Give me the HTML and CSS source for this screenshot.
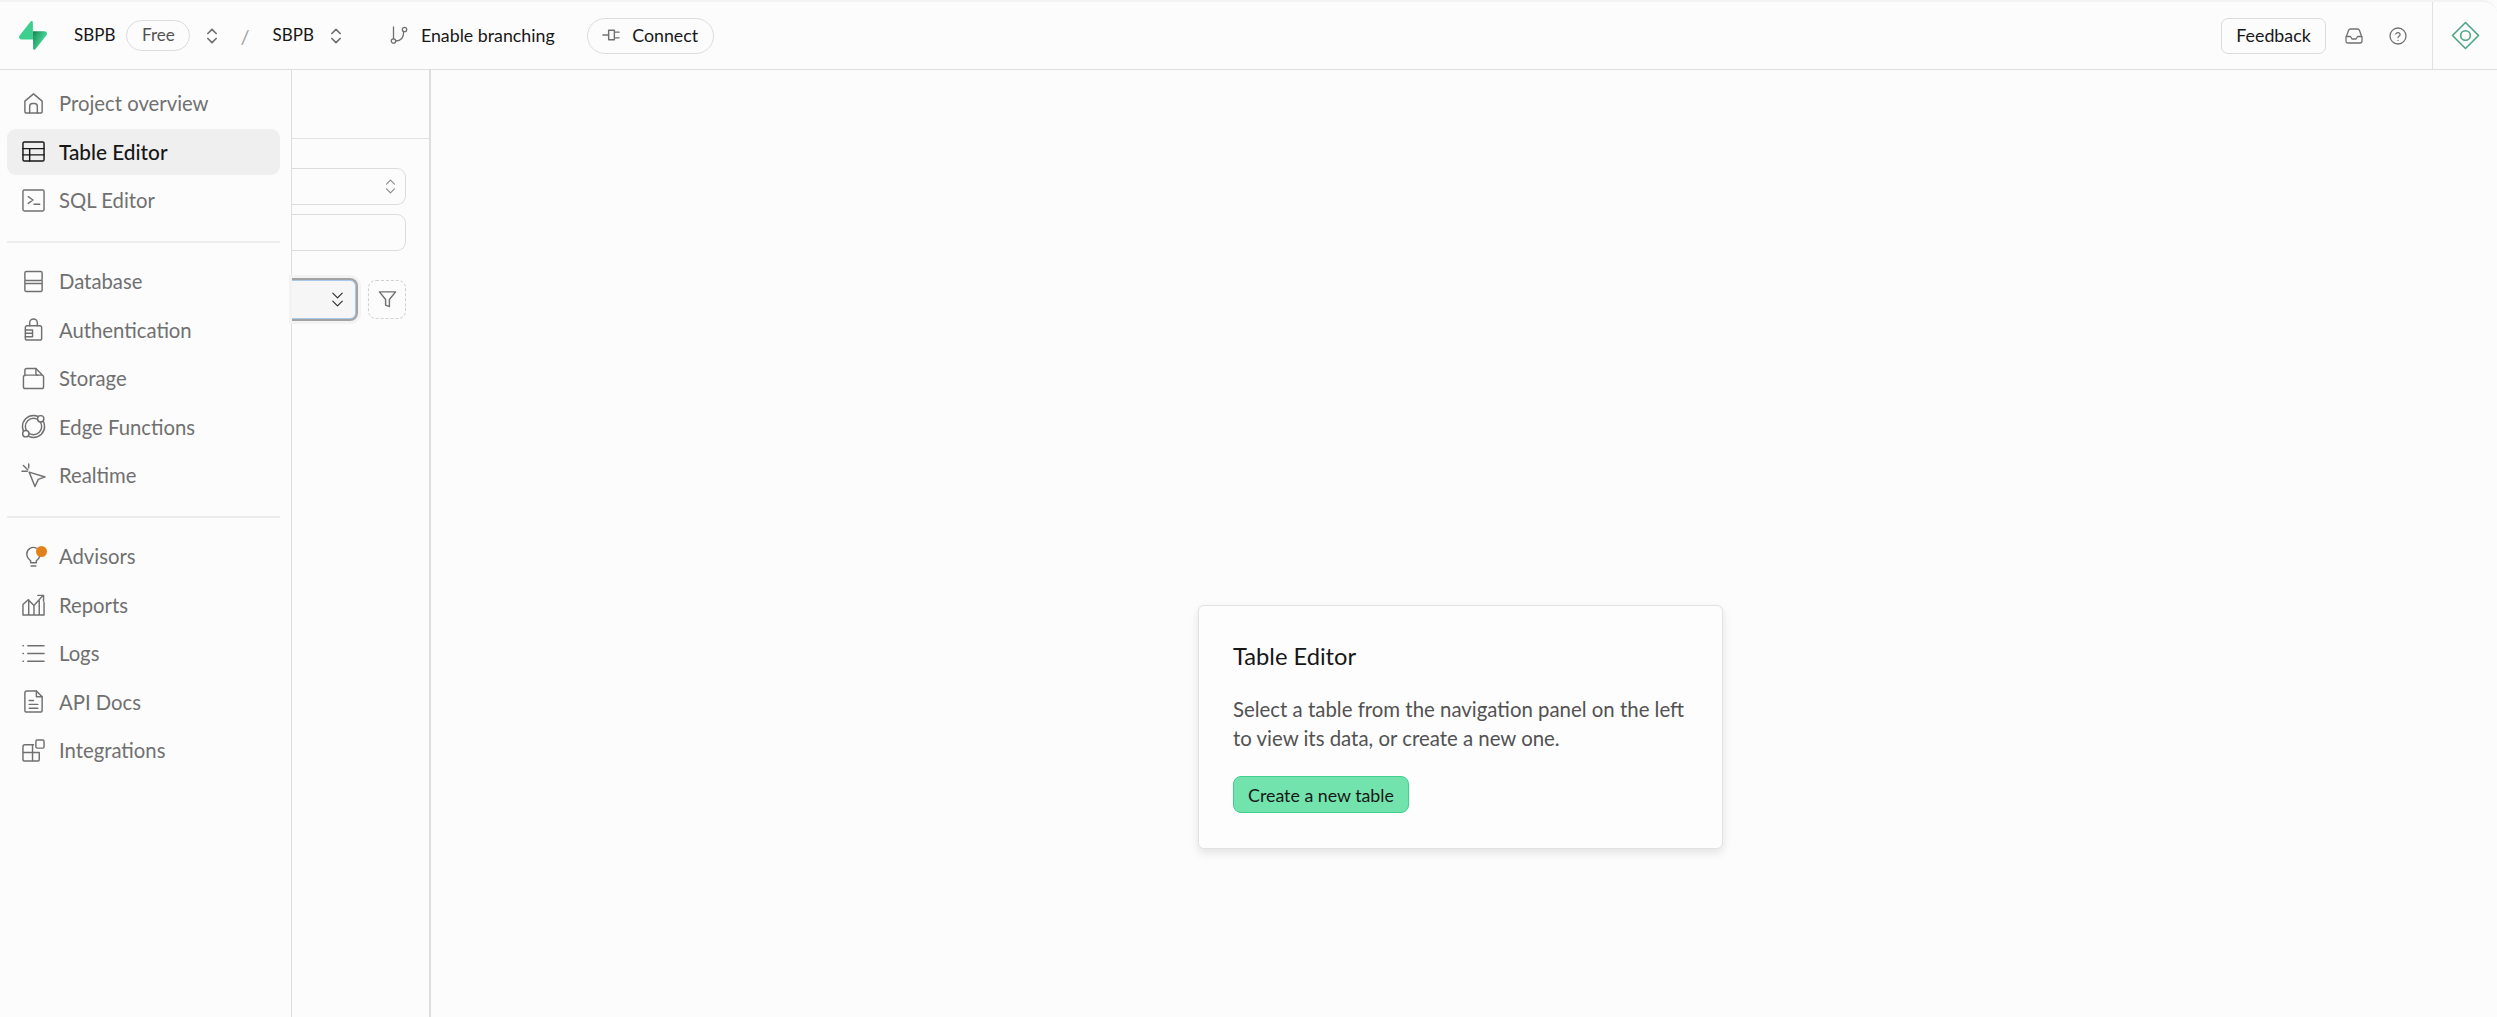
FILE: index.html
```html
<!DOCTYPE html>
<html>
<head>
    <meta charset="UTF-8">
    <title>Table Editor</title>
    <link rel="stylesheet" href="styles.css">
</head>
<body>
    <svg class="defs" width="0" height="0">
        <defs>
            <linearGradient id="logo-a" x1="53.97" y1="54.97" x2="94.16" y2="71.83" gradientUnits="userSpaceOnUse">
                <stop offset="0" stop-color="#249361"/>
                <stop offset="1" stop-color="#3ECF8E"/>
            </linearGradient>
            <linearGradient id="logo-b" x1="36.16" y1="30.58" x2="54.48" y2="65.08" gradientUnits="userSpaceOnUse">
                <stop offset="0" stop-color="#000"/>
                <stop offset="1" stop-color="#000" stop-opacity="0"/>
            </linearGradient>
        </defs>
    </svg>

    <header class="topbar">
        <svg class="logo" viewBox="0 0 109 113">
            <path d="M63.7 110.3C60.8 113.9 55.1 111.9 55 107.3L54 40.1H99.2C107.4 40.1 112 49.5 106.9 55.9L63.7 110.3Z" fill="url(#logo-a)"/>
            <path d="M63.7 110.3C60.8 113.9 55.1 111.9 55 107.3L54 40.1H99.2C107.4 40.1 112 49.5 106.9 55.9L63.7 110.3Z" fill="url(#logo-b)" fill-opacity="0.2"/>
            <path d="M45.3 2.1C48.2 -1.5 54 0.4 54 5L54.5 72.3H9.8C1.6 72.3 -2.9 62.8 2.2 56.4L45.3 2.1Z" fill="#3ECF8E"/>
        </svg>
        <span class="crumb crumb-org">SBPB</span>
        <span class="plan">Free</span>
        <svg class="icon-sm chevrons" viewBox="0 0 24 24"><path d="m7 9 5-5 5 5M7 15l5 5 5-5"/></svg>
        <span class="slash">/</span>
        <span class="crumb">SBPB</span>
        <svg class="icon-sm chevrons" viewBox="0 0 24 24"><path d="m7 9 5-5 5 5M7 15l5 5 5-5"/></svg>
        <a class="branching">
            <svg class="icon-sm" viewBox="0 0 18 18"><circle cx="3.5" cy="15" r="2.2"/><circle cx="14.5" cy="3.5" r="2.2"/><path d="M3.5 1v11.8M5.7 15c5 0 8-3.5 8-9.5"/></svg>
            Enable branching
        </a>
        <a class="connect">
            <svg class="icon-plug" viewBox="0 0 20 14"><path d="M1 7h6M7 2h6v10H7zM13 4h5M13 10h5"/></svg>
            Connect
        </a>
        <div class="topbar-right">
            <a class="feedback">Feedback</a>
            <svg class="icon-sm inbox" viewBox="0 0 18 16"><path d="M1 9.5 3.5 2.5Q4 1 5.5 1h7q1.5 0 2 1.5L17 9.5V13q0 2-2 2H3q-2 0-2-2zM1 8.5h4.5L7 11h4l1.5-2.5H17"/></svg>
            <svg class="icon-sm help" viewBox="0 0 18 18"><circle cx="9" cy="9" r="8"/><path d="M6.8 7a2.3 2.3 0 0 1 4.4.6c0 1.5-2.2 1.8-2.2 3"/><path d="M9 13.3v.1"/></svg>
            <div class="account">
                <svg class="diamond" viewBox="0 0 30 30"><path d="M15 1.5 28.5 15 15 28.5 1.5 15z"/><circle cx="15" cy="15" r="5"/></svg>
            </div>
        </div>
    </header>

    <div class="layout">
        <nav class="sidebar">
            <div class="nav-group">
                <a class="nav-item">
                    <svg class="nav-icon" viewBox="0 0 24 24"><path d="M3 9.5 12 2l9 7.5V20q0 2-2 2H5q-2 0-2-2z"/><path d="M8 22v-7q0-3 3-3h2q3 0 3 3v7"/></svg>
                    Project overview
                </a>
                <a class="nav-item active">
                    <svg class="nav-icon" viewBox="0 0 24 24"><rect x="1" y="2" width="22" height="20" rx="1.5"/><path d="M1 9h22M1 15.5h22M8 9v13"/></svg>
                    Table Editor
                </a>
                <a class="nav-item">
                    <svg class="nav-icon" viewBox="0 0 24 24"><rect x="1" y="1" width="22" height="22" rx="1.5"/><path d="m6.5 8 5 3.5-5 3.5M12.5 16h6"/></svg>
                    SQL Editor
                </a>
            </div>
            <div class="nav-line"></div>
            <div class="nav-group">
                <a class="nav-item">
                    <svg class="nav-icon" viewBox="0 0 24 24"><rect x="3" y="1.5" width="18" height="9.5" rx="1.5"/><rect x="3" y="14" width="18" height="8.5" rx="1.5"/><path d="M3 11v3M21 11v3"/></svg>
                    Database
                </a>
                <a class="nav-item">
                    <svg class="nav-icon" viewBox="0 0 24 24"><path d="M8 8V5a4 4 0 0 1 8 0v3"/><rect x="3.5" y="8" width="17" height="15" rx="2"/><path d="M3.5 12.5H11v7H3.5M3.5 16H11"/></svg>
                    Authentication
                </a>
                <a class="nav-item">
                    <svg class="nav-icon" viewBox="0 0 24 24"><path d="M1.5 10.5v10q0 2 2 2h17q2 0 2-2v-10q0-2-2-2h-17q-2 0-2 2zM3 9V3.5q0-2 2-2h9.5L21 8"/><path d="M14.5 1.5v5q0 2 2 2"/></svg>
                    Storage
                </a>
                <a class="nav-item">
                    <svg class="nav-icon nav-icon-big" viewBox="0 0 26 26"><circle cx="13" cy="13" r="8.5"/><circle cx="13" cy="13" r="11.5"/><circle cx="20.5" cy="5" r="3.3" class="fill-bg"/><circle cx="5" cy="20.5" r="3.3" class="fill-bg"/></svg>
                    Edge Functions
                </a>
                <a class="nav-item">
                    <svg class="nav-icon nav-icon-big" viewBox="0 0 26 26"><path d="m8.5 9.5 16.5 5-7 2.5-3.5 7.5z"/><path d="M1 8.5h5.5M2.5 2.5 7 7M8 1v4"/></svg>
                    Realtime
                </a>
            </div>
            <div class="nav-line"></div>
            <div class="nav-group">
                <a class="nav-item">
                    <svg class="nav-icon" viewBox="0 0 24 24"><path d="M9 16.5C6.5 14.5 5 12.5 5 9.5a7 7 0 0 1 10-6.3M15 16.5c1.5-1.3 2.8-2.5 3.4-4.5M9 16.5v2h6v-2M9.5 22h5"/></svg>
                    <span class="dot"></span>
                    Advisors
                </a>
                <a class="nav-item">
                    <svg class="nav-icon" viewBox="0 0 24 24"><path d="M1 23V12l5.500-5 6 6 9-10M16.500 2.500h6v6M1 23h22V10M7 7v16M12.500 13v10M18 8v15"/></svg>
                    Reports
                </a>
                <a class="nav-item">
                    <svg class="nav-icon" viewBox="0 0 24 24"><path d="M6 4h17M6 12h17M6 20h17M1 4h.5M1 12h.5M1 20h.5"/></svg>
                    Logs
                </a>
                <a class="nav-item">
                    <svg class="nav-icon" viewBox="0 0 24 24"><path d="M15 1H5Q3 1 3 3v18q0 2 2 2h14q2 0 2-2V7z"/><path d="M15 1v6h6M7.5 11H12M7.5 15h9M7.5 19h9"/></svg>
                    API Docs
                </a>
                <a class="nav-item">
                    <svg class="nav-icon" viewBox="0 0 24 24"><rect x="14.5" y="1" width="8.5" height="8.5" rx="1.5"/><path d="M11 6H3Q1 6 1 8v13q0 2 2 2h13q2 0 2-2v-7H1M11 6v17"/><path d="M11 6h1"/></svg>
                    Integrations
                </a>
            </div>
        </nav>

        <aside class="panel">
            <div class="panel-head"></div>
            <div class="panel-body">
                <div class="field field-select">
                    <svg class="icon-xs" viewBox="0 0 24 24"><path d="m7 9 5-5 5 5M7 15l5 5 5-5"/></svg>
                </div>
                <div class="field"></div>
                <div class="filter-row">
                    <div class="filter-select">
                        <svg class="icon-xs dark" viewBox="0 0 24 24"><path d="m6 3 6 6 6-6M6 13l6 6 6-6" transform="translate(0 1)"/></svg>
                    </div>
                    <button class="filter-button">
                        <svg class="icon-filter" viewBox="0 0 20 20"><path d="M1.5 2h17L12 10v7.5L8 16v-6z"/></svg>
                    </button>
                </div>
            </div>
        </aside>

        <main class="main">
            <section class="card">
                <h3>Table Editor</h3>
                <p>Select a table from the navigation panel on the left to view its data, or create a new one.</p>
                <button class="primary">Create a new table</button>
            </section>
        </main>
    </div>
</body>
</html>
```

FILE: styles.css
```css
* {
    box-sizing: border-box;
}

html, body {
    height: 100%;
}

body {
    margin: 0;
    background: #fcfcfc;
    color: #171717;
    font-family: Lato, "Liberation Sans", sans-serif;
    overflow: hidden;
}

.defs {
    display: block;
    height: 0;
}

svg {
    fill: none;
    stroke: currentColor;
    stroke-linecap: round;
    stroke-linejoin: round;
    flex: none;
}

/* top bar */
.topbar {
    height: 70px;
    display: flex;
    align-items: center;
    padding-left: 19px;
    border-top: 2px solid #f3f3f3;
    border-bottom: 1px solid #dedede;
    border-top-right-radius: 14px;
    font-size: 17px;
}

.logo {
    width: 28px;
    height: 29px;
    stroke: none;
    margin-right: 27px;
}

.crumb {
    margin-bottom: 2px;
}

.crumb-org {
    margin-right: 11px;
}

.plan {
    height: 31px;
    width: 64px;
    padding-bottom: 2px;
    border: 1px solid #dcdcdc;
    border-radius: 16px;
    color: #525252;
    display: flex;
    align-items: center;
    justify-content: center;
}

.icon-sm {
    width: 18px;
    height: 18px;
    color: #707070;
    stroke-width: 1.3;
}

.chevrons {
    width: 20px;
    height: 20px;
    stroke-width: 2;
    margin: 0 12px;
}

.slash {
    color: #a0a0a0;
    font-size: 20px;
    margin: 0 23px 0 6px;
}

.branching {
    display: flex;
    align-items: center;
    gap: 13px;
    margin: 0 0 2px 32px;
    font-size: 17.8px;
}

.connect {
    height: 36px;
    width: 127px;
    margin-left: 32px;
    padding-bottom: 2px;
    border: 1px solid #dcdcdc;
    border-radius: 18px;
    display: flex;
    align-items: center;
    justify-content: center;
    gap: 11px;
    font-size: 17.8px;
}

.icon-plug {
    width: 19px;
    height: 14px;
    color: #707070;
    stroke-width: 1.5;
}

.topbar-right {
    margin-left: auto;
    height: 100%;
    display: flex;
    align-items: center;
}

.feedback {
    height: 36px;
    width: 105px;
    padding-bottom: 2px;
    border: 1px solid #dcdcdc;
    border-radius: 7px;
    display: flex;
    align-items: center;
    justify-content: center;
    font-size: 17.8px;
}

.inbox {
    margin-left: 19px;
}

.help {
    margin-left: 26px;
}

.account {
    height: 100%;
    width: 65px;
    margin-left: 25px;
    border-left: 1px solid #e2e2e2;
    display: flex;
    align-items: center;
    justify-content: center;
}

.diamond {
    width: 29px;
    height: 29px;
    color: #4aa583;
    stroke-width: 1.6;
}

/* body of the page */
.layout {
    display: flex;
    height: 947px;
}

.sidebar {
    width: 292px;
    flex: none;
    padding: 10px 11px 0 7px;
    border-right: 1px solid #dedede;
}

.nav-group {
    display: flex;
    flex-direction: column;
    gap: 2.5px;
}

.nav-item {
    position: relative;
    height: 46px;
    display: flex;
    align-items: center;
    gap: 14px;
    padding-left: 15px;
    border-radius: 9px;
    color: #707070;
    font-size: 20.3px;
}

.nav-item.active {
    background: #efefef;
    color: #171717;
    font-size: 20.8px;
    font-weight: 500;
}

.nav-icon {
    width: 23px;
    height: 23px;
    stroke-width: 1.5;
}

.nav-icon-big {
    width: 25px;
    height: 25px;
    margin: 0 -1px;
}

.fill-bg {
    fill: #fcfcfc;
}

.dot {
    position: absolute;
    left: 29px;
    top: 13px;
    width: 11px;
    height: 11px;
    border-radius: 50%;
    background: #e2811a;
}

.nav-line {
    height: 2px;
    margin: 18px 0 15px;
    background: #ededed;
}

/* clipped panel */
.panel {
    width: 139px;
    flex: none;
    border-right: 2px solid #dedede;
}

.panel-head {
    height: 69px;
    border-bottom: 1px solid #e2e2e2;
}

.panel-body {
    padding-top: 29px;
}

.field {
    height: 37px;
    width: 114px;
    margin-bottom: 9px;
    border: 1px solid #dcdcdc;
    border-left: none;
    border-radius: 0 9px 9px 0;
    display: flex;
    align-items: center;
    justify-content: flex-end;
    padding-right: 5px;
}

.icon-xs {
    width: 19px;
    height: 19px;
    color: #8a8a8a;
    stroke-width: 1.4;
}

.icon-xs.dark {
    color: #2a2a2a;
}

.filter-row {
    margin-top: 27px;
    display: flex;
    align-items: center;
    gap: 10px;
}

.filter-select {
    width: 66px;
    height: 43px;
    background: #f6f6f6;
    border: 2px solid #a3a3a3;
    border-left: none;
    border-radius: 0 8px 8px 0;
    box-shadow: inset -1px 0 0 #a9c9ea, inset 0 1px 0 #a9c9ea, inset 0 -1px 0 #a9c9ea, 0 0 0 3px #f3f3f3;
    display: flex;
    align-items: center;
    justify-content: flex-end;
    padding-right: 9px;
}

.filter-button {
    width: 38px;
    height: 39px;
    padding: 0;
    background: none;
    border: 1px dashed #cfcfcf;
    border-radius: 8px;
    display: flex;
    align-items: center;
    justify-content: center;
}

.icon-filter {
    width: 19px;
    height: 19px;
    color: #707070;
    stroke-width: 1.5;
}

/* main area */
.main {
    flex: 1;
    padding: 535px 0 0 767px;
}

.card {
    width: 525px;
    height: 244px;
    padding: 33px 34px 0;
    background: #fdfdfd;
    border: 1px solid #e2e2e2;
    border-radius: 6px;
    box-shadow: 0 4px 10px rgba(0, 0, 0, 0.1);
}

.card h3 {
    margin: 0 0 22px;
    font-size: 23.7px;
    font-weight: 400;
    line-height: 34px;
    color: #171717;
}

.card p {
    margin: 0 0 23px;
    font-size: 20.4px;
    line-height: 29px;
    color: #525252;
}

.primary {
    display: block;
    height: 37px;
    width: 176px;
    padding: 0;
    background: #72e3ad;
    border: 1px solid #3ecf8e;
    border-radius: 8px;
    color: #171717;
    font-family: inherit;
    font-size: 17.8px;
}
```
